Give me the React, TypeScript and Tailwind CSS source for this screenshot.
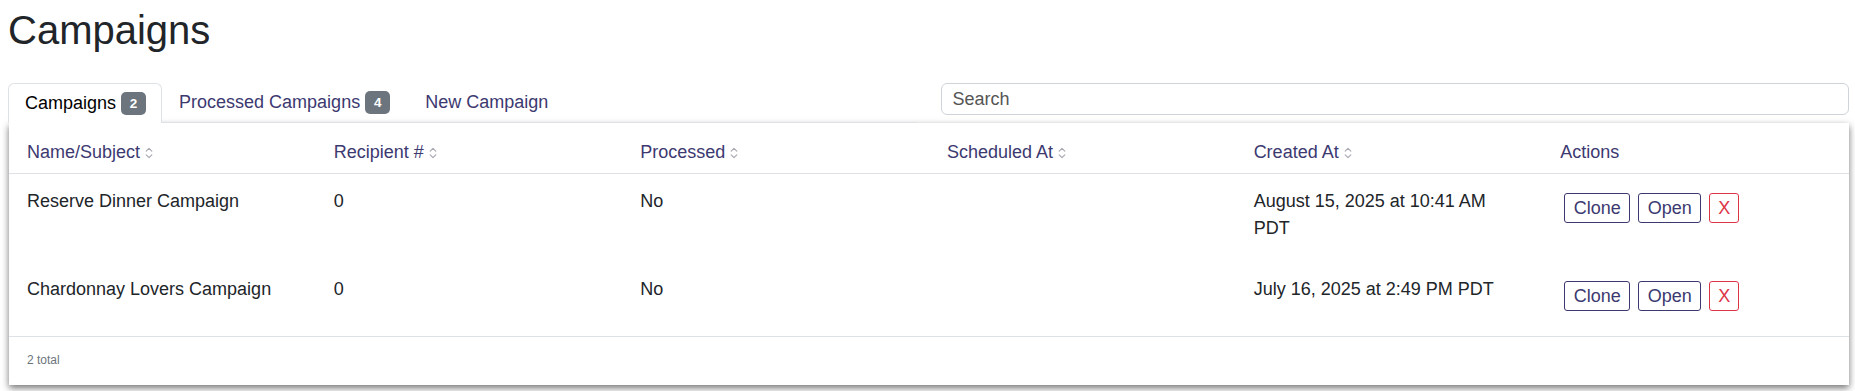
import React from 'react';

interface Campaign {
  name: string;
  recipients: number;
  processed: string;
  scheduledAt: string;
  createdAt: string;
}

const campaigns: Campaign[] = [
  {
    name: 'Reserve Dinner Campaign',
    recipients: 0,
    processed: 'No',
    scheduledAt: '',
    createdAt: 'August 15, 2025 at 10:41 AM PDT',
  },
  {
    name: 'Chardonnay Lovers Campaign',
    recipients: 0,
    processed: 'No',
    scheduledAt: '',
    createdAt: 'July 16, 2025 at 2:49 PM PDT',
  },
];

const columns = [
  { label: 'Name/Subject', sortable: true },
  { label: 'Recipient #', sortable: true },
  { label: 'Processed', sortable: true },
  { label: 'Scheduled At', sortable: true },
  { label: 'Created At', sortable: true },
  { label: 'Actions', sortable: false },
];

// little up/down chevrons next to sortable headers
const SortIcon = () => (
  <svg width="8" height="14" viewBox="0 0 8 14" fill="none" className="ml-[5px] shrink-0">
    <path d="M1.2 5.2 L4 2.4 L6.8 5.2" stroke="#a9a9b3" strokeWidth="1.2" strokeLinecap="round" strokeLinejoin="round" />
    <path d="M1.2 8.8 L4 11.6 L6.8 8.8" stroke="#a9a9b3" strokeWidth="1.2" strokeLinecap="round" strokeLinejoin="round" />
  </svg>
);

const Badge = ({ count }: { count: number }) => (
  <span className="ml-[5px] inline-flex h-[23px] w-[25px] items-center justify-center rounded-[5px] bg-[#6c757d] text-[13.5px] font-bold leading-none text-white">
    {count}
  </span>
);

export default function App() {
  return (
    <div className="min-h-screen bg-white pl-2 pr-[6px] pt-[6px] text-[18px] text-[#212529] [font-family:'Liberation_Sans',Arial,sans-serif]">
      <h1 className="mb-[29px] text-[40px] font-normal leading-[48px] text-[#212529]">Campaigns</h1>

      <div className="grid grid-cols-2 gap-x-6">
        {/* tabs */}
        <div className="flex items-end border-b border-[#dee2e6]">
          <div className="-mb-px flex h-[40px] items-center rounded-t-[6px] border border-b-0 border-[#dee2e6] bg-white pl-[16px] pr-[15px] text-black">
            Campaigns
            <Badge count={2} />
          </div>
          <div className="flex h-[39px] items-center pl-[17px] pr-[18px] text-[#3c3970]">
            Processed Campaigns
            <Badge count={4} />
          </div>
          <div className="flex h-[39px] items-center px-[17px] text-[#3c3970]">New Campaign</div>
        </div>

        {/* search */}
        <div className="pb-[7px]">
          <input
            type="text"
            placeholder="Search"
            className="h-[32px] w-full rounded-[6px] border border-[#ced4da] bg-white px-[11px] text-[18px] leading-[22px] text-[#212529] outline-none placeholder:text-[#555]"
          />
        </div>
      </div>

      <div className="ml-px bg-white shadow-[0_3px_7px_rgba(0,0,0,0.55)]">
        <table className="w-full table-fixed border-collapse">
          <thead>
            <tr className="border-b border-[#dee2e6]">
              {columns.map((col) => (
                <th key={col.label} className="px-[18px] pb-[7px] pt-[16px] text-left font-normal leading-[27px] text-[#3c3970]">
                  <span className="flex items-center">
                    {col.label}
                    {col.sortable && <SortIcon />}
                  </span>
                </th>
              ))}
            </tr>
          </thead>
          <tbody>
            {campaigns.map((c) => (
              <tr key={c.name}>
                <td className="px-[18px] pb-[20px] pt-[14px] align-top leading-[27px]">{c.name}</td>
                <td className="px-[18px] pb-[20px] pt-[14px] align-top leading-[27px]">{c.recipients}</td>
                <td className="px-[18px] pb-[20px] pt-[14px] align-top leading-[27px]">{c.processed}</td>
                <td className="px-[18px] pb-[20px] pt-[14px] align-top leading-[27px]">{c.scheduledAt}</td>
                <td className="px-[18px] pb-[20px] pt-[14px] align-top leading-[27px]">{c.createdAt}</td>
                <td className="px-[18px] pb-[20px] pt-[14px] align-top leading-[27px]">
                  <div className="flex">
                    <button className="mx-1 my-[5px] rounded-[3px] border border-[#3c3970] bg-white px-[8.5px] py-[3px] text-[18px] leading-[22px] text-[#3c3970]">
                      Clone
                    </button>
                    <button className="mx-1 my-[5px] rounded-[3px] border border-[#3c3970] bg-white px-[8.5px] py-[3px] text-[18px] leading-[22px] text-[#3c3970]">
                      Open
                    </button>
                    <button className="mx-1 my-[5px] rounded-[3px] border border-[#dc3545] bg-white px-[8px] py-[3px] text-[18px] leading-[22px] text-[#dc3545]">
                      X
                    </button>
                  </div>
                </td>
              </tr>
            ))}
          </tbody>
        </table>
        <div className="h-[49px] border-t border-[#dee2e6] px-[18px] pt-[14px] text-[12px] leading-[18px] text-[#6c757d]">
          2 total
        </div>
      </div>
    </div>
  );
}
